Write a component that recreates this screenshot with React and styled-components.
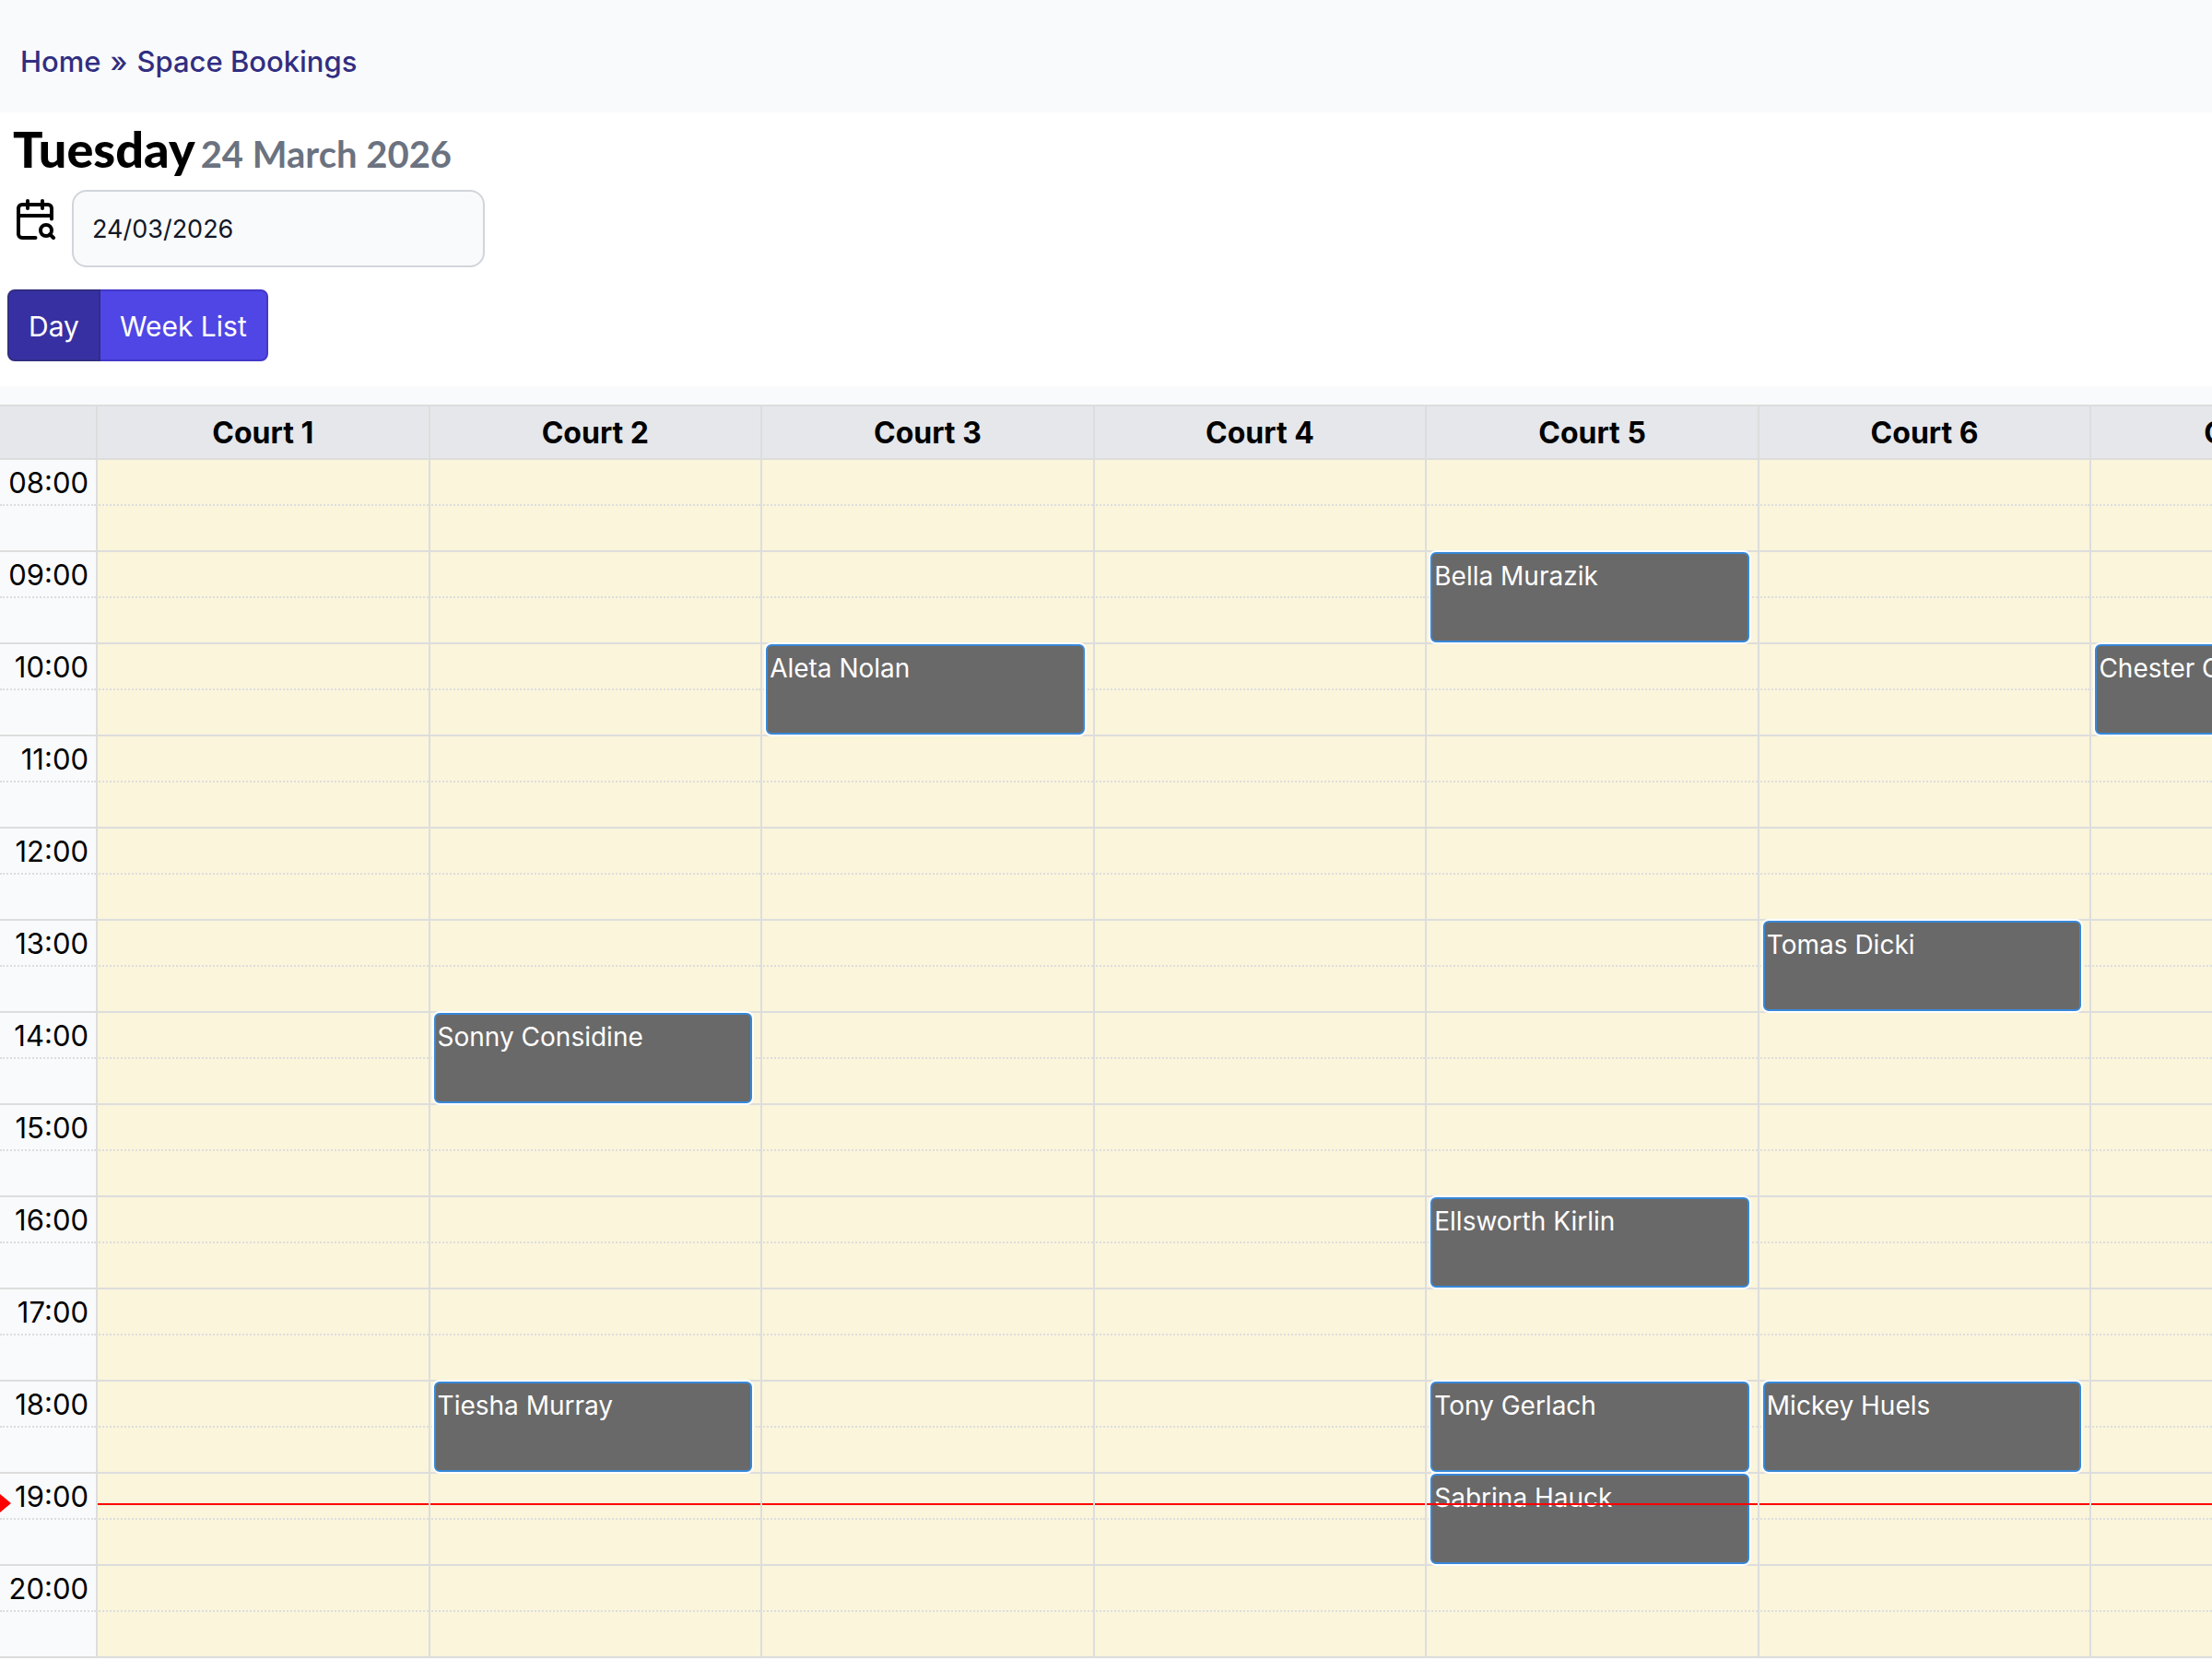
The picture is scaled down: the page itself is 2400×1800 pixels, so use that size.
import React, { useState } from "react";
import styled, { createGlobalStyle, css } from "styled-components";
import { CalendarSearch } from "lucide-react";

const LINE = "#dddddd";

const GlobalStyle = createGlobalStyle`
  *, *::before, *::after { box-sizing: border-box; }
  body {
    margin: 0;
    background: #f9fafb;
    color: #000;
    font-family: Inter, "Liberation Sans", sans-serif;
    font-size: 31px;
    line-height: 48px;
  }
`;

const Breadcrumb = styled.nav`
  display: flex;
  gap: 10px;
  padding: 43px 22px 31px;
  color: #312e81;
  font-weight: 500;
`;

const Crumb = styled.a`
  color: inherit;
  text-decoration: none;
`;

const Header = styled.header`
  display: flex;
  flex-direction: column;
  align-items: flex-start;
  padding: 10px 8px 27px;
  margin-bottom: 20px;
  background: #fff;
`;

const Title = styled.h1`
  display: flex;
  align-items: baseline;
  gap: 6px;
  margin: 0;
  padding: 0 6px;
  font-family: Lato, Inter, sans-serif;
  font-size: 54px;
  line-height: 60px;
  font-weight: 900;
`;

const TitleDate = styled.small`
  color: #6b7280;
  font-size: 40px;
  line-height: 48px;
  font-weight: 700;
`;

const DateField = styled.div`
  display: flex;
  align-items: flex-start;
  gap: 16px;
  padding: 14px 6px 24px;
`;

const DateLabel = styled.label`
  display: flex;
  padding-top: 8px;
`;

const DateInput = styled.input`
  width: 448px;
  height: 84px;
  padding: 0 20px;
  border: 2px solid #d1d5db;
  border-radius: 16px;
  background: #f9fafb;
  color: #111827;
  font: inherit;
  font-size: 27px;
`;

const ViewSwitch = styled.div`
  display: flex;
`;

const ViewButton = styled.button`
  padding: 14px 21px 12px;
  border: 2px solid #4338ca;
  background: #4f46e5;
  color: #fff;
  font: inherit;
  cursor: pointer;

  &:first-child { border-radius: 8px 0 0 8px; }
  &:last-child { border-radius: 0 8px 8px 0; }
  & + & { margin-left: -2px; }
  font-size: 30px;

  ${({ $active }) => $active && css`
    position: relative;
    z-index: 1;
    border-color: #312e81;
    background: #3730a3;
  `}
`;

const Scroller = styled.main`
  overflow-x: auto;
  scrollbar-width: none;
`;

const Calendar = styled.table`
  width: 100%;
  min-width: 2628px;
  table-layout: fixed;
  border-spacing: 0;
  border-bottom: 2px solid ${LINE};
`;

const TimeColumn = styled.col`
  width: 104px;
`;

const CornerCell = styled.td`
  height: 58px;
  padding: 0;
  border-top: 2px solid ${LINE};
  background: #e5e7eb;
`;

const CourtHeading = styled.th`
  height: 58px;
  padding: 4px 4px 2px;
  border-top: 2px solid ${LINE};
  border-left: 2px solid ${LINE};
  background: #e5e7eb;
  font-size: 32px;
  font-weight: 700;
`;

const TimeCell = styled.th`
  position: relative;
  height: 50px;
  padding: 1px 8px 0 0;
  border-top: 2px ${({ $half }) => ($half ? "dotted" : "solid")} ${LINE};
  font-weight: 400;
  line-height: 47px;
  text-align: right;
`;

const Slot = styled.td`
  position: relative;
  height: 50px;
  padding: 0;
  border-top: 2px ${({ $half }) => ($half ? "dotted" : "solid")} ${LINE};
  border-left: 2px solid ${LINE};
  background: #faf5db;
`;

const Booking = styled.a`
  position: absolute;
  z-index: 1;
  top: 0;
  left: 4px;
  right: 9px;
  height: 98px;
  padding: 4px 2px;
  overflow: hidden;
  border: 2px solid #3788d8;
  border-radius: 6px;
  background: #696969;
  box-shadow: 0 0 0 2px #fff;
  color: #fff;
  font-size: 28px;
  line-height: 40px;
  text-decoration: none;
  white-space: nowrap;
`;

const NowLine = styled.div`
  position: absolute;
  z-index: 2;
  top: 32px;
  left: 0;
  right: 0;
  border-top: 2px solid red;
`;

const NowArrow = styled.div`
  position: absolute;
  top: 22px;
  left: 0;
  border: 10px solid transparent;
  border-left: 12px solid red;
  border-right-width: 0;
`;

const courts = [1, 2, 3, 4, 5, 6, 7];
const hours = Array.from({ length: 13 }, (_, i) => i + 8);
const nowHour = 19;

const bookings = [
  { court: 5, hour: 9, name: "Bella Murazik" },
  { court: 3, hour: 10, name: "Aleta Nolan" },
  { court: 7, hour: 10, name: "Chester Goodwin" },
  { court: 6, hour: 13, name: "Tomas Dicki" },
  { court: 2, hour: 14, name: "Sonny Considine" },
  { court: 5, hour: 16, name: "Ellsworth Kirlin" },
  { court: 2, hour: 18, name: "Tiesha Murray" },
  { court: 5, hour: 18, name: "Tony Gerlach" },
  { court: 6, hour: 18, name: "Mickey Huels" },
  { court: 5, hour: 19, name: "Sabrina Hauck" },
];

function HourRows({ hour }) {
  const isNow = hour === nowHour;
  return (
    <>
      <tr>
        <TimeCell scope="row">
          {String(hour).padStart(2, "0")}:00
          {isNow && <NowArrow />}
        </TimeCell>
        {courts.map((court) => {
          const booking = bookings.find((b) => b.court === court && b.hour === hour);
          return (
            <Slot key={court}>
              {booking && <Booking href="#">{booking.name}</Booking>}
              {isNow && <NowLine />}
            </Slot>
          );
        })}
      </tr>
      <tr>
        <TimeCell as="td" $half />
        {courts.map((court) => (
          <Slot key={court} $half />
        ))}
      </tr>
    </>
  );
}

export default function App() {
  const [view, setView] = useState("Day");
  const [date, setDate] = useState("24/03/2026");

  return (
    <>
      <GlobalStyle />
      <Breadcrumb aria-label="Breadcrumb">
        <Crumb href="#">Home</Crumb>
        <span>»</span>
        <Crumb href="#">Space Bookings</Crumb>
      </Breadcrumb>
      <Header>
        <Title>
          Tuesday <TitleDate>24 March 2026</TitleDate>
        </Title>
        <DateField>
          <DateLabel htmlFor="date" aria-label="Date">
            <CalendarSearch size={48} />
          </DateLabel>
          <DateInput id="date" type="text" value={date} onChange={(e) => setDate(e.target.value)} />
        </DateField>
        <ViewSwitch>
          {["Day", "Week List"].map((name) => (
            <ViewButton key={name} type="button" $active={view === name} onClick={() => setView(name)}>
              {name}
            </ViewButton>
          ))}
        </ViewSwitch>
      </Header>
      <Scroller>
        <Calendar>
          <colgroup>
            <TimeColumn />
            {courts.map((court) => (
              <col key={court} />
            ))}
          </colgroup>
          <thead>
            <tr>
              <CornerCell />
              {courts.map((court) => (
                <CourtHeading key={court} scope="col">
                  Court {court}
                </CourtHeading>
              ))}
            </tr>
          </thead>
          <tbody>
            {hours.map((hour) => (
              <HourRows key={hour} hour={hour} />
            ))}
          </tbody>
        </Calendar>
      </Scroller>
    </>
  );
}
